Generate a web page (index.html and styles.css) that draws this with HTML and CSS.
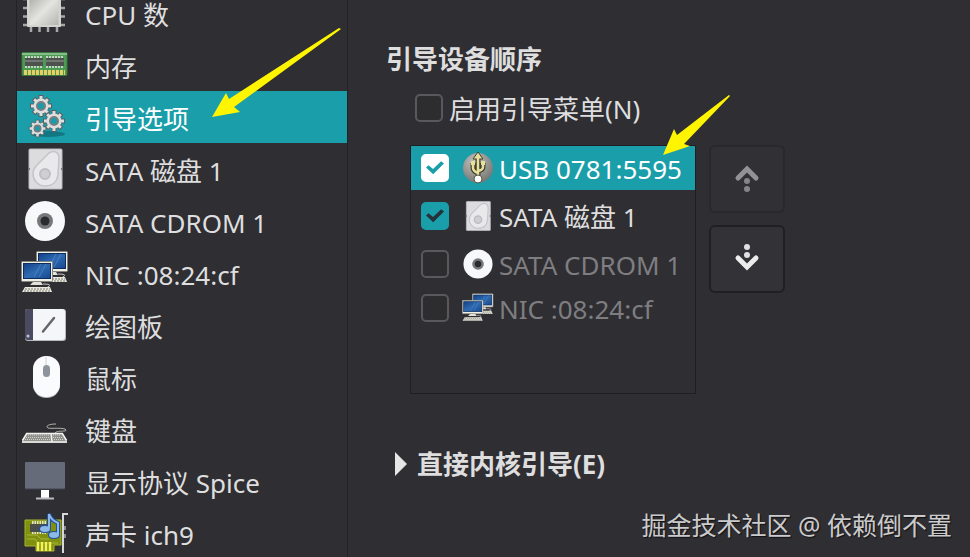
FILE: index.html
```html
<!DOCTYPE html>
<html lang="zh-CN">
<head>
    <meta charset="UTF-8">
    <meta name="viewport" content="width=device-width, initial-scale=1.0">
    <title>引导选项</title>
    <link rel="stylesheet" href="styles.css">
</head>
<body>
    <svg class="sprite" aria-hidden="true">
        <defs>
            <linearGradient id="metal" x1="0" y1="0" x2="1" y2="1">
                <stop offset="0" stop-color="#a9aaa6"/>
                <stop offset=".5" stop-color="#e4e4e1"/>
                <stop offset="1" stop-color="#b4b4b1"/>
            </linearGradient>
            <linearGradient id="screen" x1="0" y1="0" x2="1" y2="1">
                <stop offset="0" stop-color="#123f86"/>
                <stop offset=".5" stop-color="#2f6bb2"/>
                <stop offset="1" stop-color="#17498f"/>
            </linearGradient>
            <radialGradient id="ball" cx=".4" cy=".3" r=".7">
                <stop offset="0" stop-color="#c3c3bf"/>
                <stop offset="1" stop-color="#777775"/>
            </radialGradient>
        </defs>
        <symbol id="disk" viewBox="2 2 44 44">
            <rect x="8" y="4" width="33" height="40" rx="1" fill="#dcdcdf" stroke="#bdbdc1"/>
            <path d="M28 8c5-3 10-1 10 5l-1 17c-1 7-6 11-13 11s-12-6-12-12c0-4 1-6 4-9z" fill="#e9e9eb" stroke="#c4c4c8" stroke-width="1.5"/>
            <circle cx="24" cy="29" r="5" fill="#cfcfd3" stroke="#bfbfc3" stroke-width="2"/>
            <path d="M8 23v2M41 23v2" stroke="#77777b" stroke-width="2"/>
        </symbol>
        <symbol id="cd" viewBox="2 2 44 44">
            <circle cx="24" cy="24" r="20" fill="#f7f8fa"/>
            <circle cx="24" cy="24" r="8" fill="#77787b"/>
            <circle cx="24" cy="24" r="4.5" fill="#2a2b2e"/>
        </symbol>
        <symbol id="computer" viewBox="0 0 33 32">
            <rect x=".5" y=".5" width="31" height="20" rx="1" fill="#f0f0e6" stroke="#85857f"/>
            <rect x="2.500" y="2.500" width="27" height="15" fill="url(#screen)" stroke="#0d2d61"/>
            <path d="M13 16L20 3M18 16L25 3" stroke="#5d92cd" opacity=".6"/>
            <path d="M12 21h8l2 3H9z" fill="#e2e2d8"/>
            <path d="M22 23q10 0 5 3t-2 2" fill="none" stroke="#c9c9c0"/>
            <path d="M4 26h25l2 5H1z" fill="#e9e9df"/>
            <path d="M4 28h25M3 30h26" stroke="#77776f" stroke-dasharray="2 1"/>
        </symbol>
        <symbol id="nic" viewBox="0 0 48 48">
            <use href="#computer" x="15" y="2" width="33" height="32"/>
            <use href="#computer" x="0" y="12" width="33" height="32"/>
        </symbol>
        <symbol id="gear" viewBox="0 0 24 24">
            <path d="M12 1v22M1 12h22M4.500 4.500l15 15M19.500 4.500l-15 15" stroke="#5b5f60" stroke-width="5"/>
            <path d="M12 2v20M2 12h20M5.200 5.200l13.600 13.600M18.800 5.200L5.200 18.800" stroke="#dedede" stroke-width="3"/>
            <circle cx="12" cy="12" r="7.500" fill="#dedede"/>
            <circle cx="12" cy="12" r="4" fill="#179daa" stroke="#777c7e" stroke-width="2"/>
        </symbol>
    </svg>

    <nav class="sidebar">
        <a class="item" href="#cpu">
            <svg class="icon" viewBox="0 0 48 48">
                <path d="M2 10h42M2 19h42M2 27.500h42M2 36h42M10 3v40M18.500 3v40M27 3v40M36 3v40" stroke="#a7a7a7" stroke-width="2.500"/>
                <rect x="6" y="5" width="34" height="33" rx="1" fill="#d3d3cf"/>
                <rect x="8.500" y="7" width="29" height="29" fill="url(#metal)"/>
            </svg>
            <span>CPU 数</span>
        </a>
        <a class="item" href="#memory">
            <svg class="icon" viewBox="0 0 48 48">
                <rect x="1" y="11.500" width="45" height="23" rx="1" fill="#4b9b52" stroke="#397a3e"/>
                <path d="M1 13h45" stroke="#85bd89" stroke-width="2"/>
                <path d="M4 16h18M25 16h18M4 26h18M25 26h18" stroke="#c9d2c6" stroke-width="2" stroke-dasharray="2 1"/>
                <path d="M4 17h18v8H4zM25 17h18v8H25z" fill="#4e524f"/>
                <path d="M4 20h18M25 20h18" stroke="#737773" stroke-width="2"/>
                <path d="M3 31.500h41" stroke="#e8cf63" stroke-width="5" stroke-dasharray="3 1"/>
            </svg>
            <span>内存</span>
        </a>
        <a class="item selected" href="#boot" aria-current="page">
            <svg class="icon" viewBox="0 0 48 48">
                <ellipse cx="27" cy="41" rx="17" ry="3" fill="#137783"/>
                <use href="#gear" x="8" y="1" width="24" height="24"/>
                <use href="#gear" x="21" y="16" width="24" height="24"/>
                <use href="#gear" x="7" y="26" width="19" height="19"/>
            </svg>
            <span>引导选项</span>
            <svg class="arrow arrow-item" width="130" height="90" viewBox="0 0 130 90" aria-hidden="true">
                <path d="M0 89L14 65L17 71L127 0L129 1L22 79L28 84z"/>
            </svg>
        </a>
        <a class="item" href="#disk1">
            <svg class="icon" viewBox="0 0 48 48"><use href="#disk" x="2" y="2" width="44" height="44"/></svg>
            <span>SATA 磁盘 1</span>
        </a>
        <a class="item" href="#cdrom1">
            <svg class="icon" viewBox="0 0 48 48"><use href="#cd" x="2" y="2" width="44" height="44"/></svg>
            <span>SATA CDROM 1</span>
        </a>
        <a class="item" href="#nic1">
            <svg class="icon" viewBox="0 0 48 48"><use href="#nic"/></svg>
            <span>NIC :08:24:cf</span>
        </a>
        <a class="item" href="#tablet">
            <svg class="icon" viewBox="0 0 48 48">
                <rect x="4" y="8" width="41" height="32" rx="3" fill="#b9bac0"/>
                <path d="M12 8H7a3 3 0 0 0-3 3v25a3 3 0 0 0 3 3h5z" fill="#4a4a60"/>
                <path d="M12 8h29a3 3 0 0 1 3 3v25a3 3 0 0 1-3 3H12z" fill="#f5f6f9"/>
                <circle cx="7" cy="35" r="1.500" fill="#c5c4e4"/>
                <path d="M22 30.500L33 17" stroke="#66676b" stroke-width="2.500" stroke-linecap="round"/>
            </svg>
            <span>绘图板</span>
        </a>
        <a class="item" href="#mouse">
            <svg class="icon" viewBox="0 0 48 48">
                <rect x="12" y="4" width="27" height="41" rx="13" fill="#b4b6ba"/>
                <rect x="12" y="3" width="27" height="41" rx="13" fill="#fafbfd"/>
                <path d="M25 4v8" stroke="#cdced2"/>
                <rect x="22" y="12" width="7" height="12" rx="3.500" fill="#8d949b"/>
            </svg>
            <span>鼠标</span>
        </a>
        <a class="item" href="#keyboard">
            <svg class="icon" viewBox="0 0 48 48">
                <path d="M35 19c-7 0-11 2-8 4 3 1 17-1 18 2 1 2-9 0-11 3" fill="none" stroke="#b5b5b0"/>
                <path d="M6 28h35l5 7v3H1v-3z" fill="#8f8f8b"/>
                <path d="M7 30h22M5 32.500h24M4 34.500h25M32 30h8M32 32.500h10M33 34.500h10" stroke="#d2d2cd" stroke-dasharray="1 1"/>
                <path d="M1 37h45M6 28.500h35M1.500 35.500L6 28M45.500 35.500L41 28M30 28l1 9" fill="none" stroke="#f2f2ee" stroke-width="1.500"/>
            </svg>
            <span>键盘</span>
        </a>
        <a class="item" href="#display">
            <svg class="icon" viewBox="0 0 48 48">
                <rect x="4" y="5" width="40" height="27" rx="1" fill="#666b79"/>
                <path d="M4 32h40" stroke="#42454f"/>
                <path d="M20 33h8v8h-8z" fill="#fff"/>
                <path d="M15 41.500h18" stroke="#b8babf" stroke-width="2"/>
            </svg>
            <span>显示协议 Spice</span>
        </a>
        <a class="item" href="#sound">
            <svg class="icon" viewBox="0 0 48 48">
                <path d="M4 11h36v25h-7v6H15v-5H4z" fill="#80900f" stroke="#a6b52b"/>
                <path d="M6 30h8l3 4h20M6 26h10l4 4h8" fill="none" stroke="#a9b63b"/>
                <path d="M17 33v9M21 33v9M25 33v9M29 33v9" stroke="#f3f25a" stroke-width="2.500"/>
                <path d="M11 13.500h15M11 23.500h15" stroke="#e4e6cf" stroke-width="3" stroke-dasharray="1.500 1"/>
                <rect x="9" y="15" width="17" height="8" fill="#4b4d4a"/>
                <path d="M47 5h-5v39" fill="none" stroke="#d6d7d9" stroke-width="2"/>
                <path d="M44 17v4M44 25v4" stroke="#8b8d90" stroke-width="2"/>
                <g fill="none" stroke="#1f519d" stroke-width="4">
                    <path d="M28 19V5q2 6 9 9v12"/>
                    <ellipse cx="24" cy="20" rx="4" ry="2"/>
                    <ellipse cx="33" cy="26" rx="4" ry="2"/>
                </g>
                <g fill="#8db8e9" stroke="#8db8e9" stroke-width="2">
                    <path d="M28 19V5q2 6 9 9v12" fill="none"/>
                    <ellipse cx="24" cy="20" rx="4" ry="2"/>
                    <ellipse cx="33" cy="26" rx="4" ry="2"/>
                </g>
            </svg>
            <span>声卡 ich9</span>
        </a>
    </nav>

    <main class="panel">
        <h1 class="heading">引导设备顺序</h1>
        <label class="menu-option">
            <input class="check" type="checkbox">
            <span>启用引导菜单(N)</span>
        </label>

        <div class="boot-order">
            <div class="devices">
                <label class="device selected">
                    <input class="check" type="checkbox" checked>
                    <svg class="device-icon" viewBox="0 0 32 32">
                        <circle cx="16" cy="16" r="15" fill="url(#ball)"/>
                        <path d="M16 5v21M11 11v5q0 3 5 5M21 11v4q0 3-5 4" fill="none" stroke="#40402c" stroke-width="5"/>
                        <path d="M16 0l5 7H11z" fill="#e7df9c" stroke="#40402c"/>
                        <path d="M16 5v21M11 11v5q0 3 5 5M21 11v4q0 3-5 4" fill="none" stroke="#e7df9c" stroke-width="2.500"/>
                        <path d="M9 9h4v4H9zM19 9h4v4h-4z" fill="#e7df9c"/>
                        <circle cx="16" cy="27" r="4" fill="#fff" stroke="#55553e"/>
                    </svg>
                    <span>USB 0781:5595</span>
                </label>
                <label class="device tall">
                    <input class="check" type="checkbox" checked>
                    <svg class="device-icon"><use href="#disk"/></svg>
                    <span>SATA 磁盘 1</span>
                </label>
                <label class="device off">
                    <input class="check" type="checkbox">
                    <svg class="device-icon"><use href="#cd"/></svg>
                    <span>SATA CDROM 1</span>
                </label>
                <label class="device off">
                    <input class="check" type="checkbox">
                    <svg class="device-icon"><use href="#nic"/></svg>
                    <span>NIC :08:24:cf</span>
                </label>
                <svg class="arrow arrow-device" width="68" height="61" viewBox="0 0 68 61" aria-hidden="true">
                    <path d="M0 60L11 34L14 40L66 0L67 1L21 49L27 51z"/>
                </svg>
            </div>
            <div class="move">
                <button class="move-btn" type="button" aria-label="上移" disabled>
                    <svg width="28" height="30" viewBox="0 0 28 30">
                        <path d="M5 14l9-9 9 9" fill="none" stroke="#929294" stroke-width="5" stroke-linecap="round"/>
                        <circle cx="14" cy="17" r="3" fill="#858587"/>
                        <circle cx="14" cy="25" r="3" fill="#858587"/>
                    </svg>
                </button>
                <button class="move-btn" type="button" aria-label="下移">
                    <svg width="28" height="30" viewBox="0 0 28 30">
                        <path d="M5 14l9 9 9-9" fill="none" stroke="#ececec" stroke-width="5" stroke-linecap="round"/>
                        <circle cx="14" cy="3" r="3" fill="#e0e0e0"/>
                        <circle cx="14" cy="11" r="3" fill="#e0e0e0"/>
                    </svg>
                </button>
            </div>
        </div>

        <details class="kernel">
            <summary>直接内核引导(E)</summary>
        </details>
        <p class="credit">掘金技术社区 @ 依赖倒不置</p>
    </main>
</body>
</html>
```

FILE: styles.css
```css
* {
    box-sizing: border-box;
}
body {
    margin: 0;
    height: 100vh;
    overflow: hidden;
    display: flex;
    background: #2f2e33;
    color: #dededf;
    font-family: "Noto Sans", "Noto Sans CJK SC", sans-serif;
    font-size: 26px;
    line-height: 36px;
}
.sprite {
    position: absolute;
    width: 0;
    height: 0;
}

/* hardware list, scrolled down a little */
.sidebar {
    flex: 0 1 332px;
    margin: -13px 0 0 16px;
    border-left: 1px solid #232227;
    border-right: 1px solid #232227;
    line-height: 28px;
}
.item {
    position: relative;
    display: flex;
    align-items: center;
    gap: 16px;
    height: 52px;
    padding: 4px 4px 0;
    color: inherit;
    text-decoration: none;
    white-space: nowrap;
}
.item.selected,
.device.selected {
    background: #1a9eaa;
    color: #fff;
}
.icon {
    flex: none;
    width: 48px;
    height: 48px;
    margin-top: -4px;
}

.panel {
    flex: 1;
    display: flex;
    flex-direction: column;
    padding: 41px 18px 14px 38px;
}
.heading {
    margin: 0;
    font-size: 26px;
    line-height: 36px;
}
.menu-option {
    display: flex;
    align-items: center;
    align-self: flex-start;
    gap: 6px;
    margin: 12px 0 19px 29px;
}
.menu-option span,
.device span {
    padding-top: 2px;
}
.check {
    appearance: none;
    flex: none;
    display: grid;
    place-items: center;
    width: 28px;
    height: 28px;
    margin: 0;
    border: 2px solid #59595c;
    border-radius: 5px;
    background: #2d2d2f;
}
.check:checked {
    border-color: #1a9eaa;
    background: #1a9eaa;
    color: #25323a;
}
.check:checked::before {
    content: "";
    width: 18px;
    height: 14px;
    background: currentColor;
    clip-path: polygon(0 47%, 14% 30%, 39% 58%, 84% 2%, 100% 17%, 40% 95%);
}
.selected .check:checked {
    border-color: #fff;
    background: #fff;
    color: #1a9eaa;
}

.boot-order {
    display: flex;
    align-items: flex-start;
    gap: 13px;
    margin: -1px 0 0 24px;
}
.devices {
    position: relative;
    flex: 0 1 286px;
    min-height: 249px;
    border: 1px solid #1f1e23;
}
.device {
    display: flex;
    align-items: center;
    height: 44px;
    padding-left: 10px;
    white-space: nowrap;
}
.device.tall {
    height: 52px;
}
.device.off {
    color: #7e7e81;
}
.device-icon {
    flex: none;
    width: 32px;
    height: 32px;
    margin: 0 5px 0 13px;
}
.move {
    display: grid;
    gap: 12px;
}
.move-btn {
    display: grid;
    place-items: center;
    width: 76px;
    height: 68px;
    padding: 0;
    border: 2px solid #202024;
    border-radius: 6px;
    background: #333237;
}
.move-btn:disabled {
    border-color: #29282d;
    background: #313035;
}

.kernel {
    margin: 52px 0 0 9px;
    font-weight: bold;
}
.kernel summary {
    display: flex;
    align-items: center;
    gap: 10px;
    list-style: none;
}
.kernel summary::before {
    content: "";
    width: 12px;
    height: 24px;
    background: #e6e6e7;
    clip-path: polygon(0 0, 100% 50%, 0 100%);
}
.credit {
    margin: auto 0 0;
    align-self: flex-end;
    color: #cbcbcd;
    font-size: 25px;
    text-shadow: 1px 1px 1px #111;
}

/* pointers drawn over the lists */
.arrow {
    position: absolute;
    fill: #fff500;
    z-index: 1;
}
.arrow-item {
    left: 195px;
    top: -63px;
}
.arrow-device {
    left: 252px;
    top: -51px;
}
```
